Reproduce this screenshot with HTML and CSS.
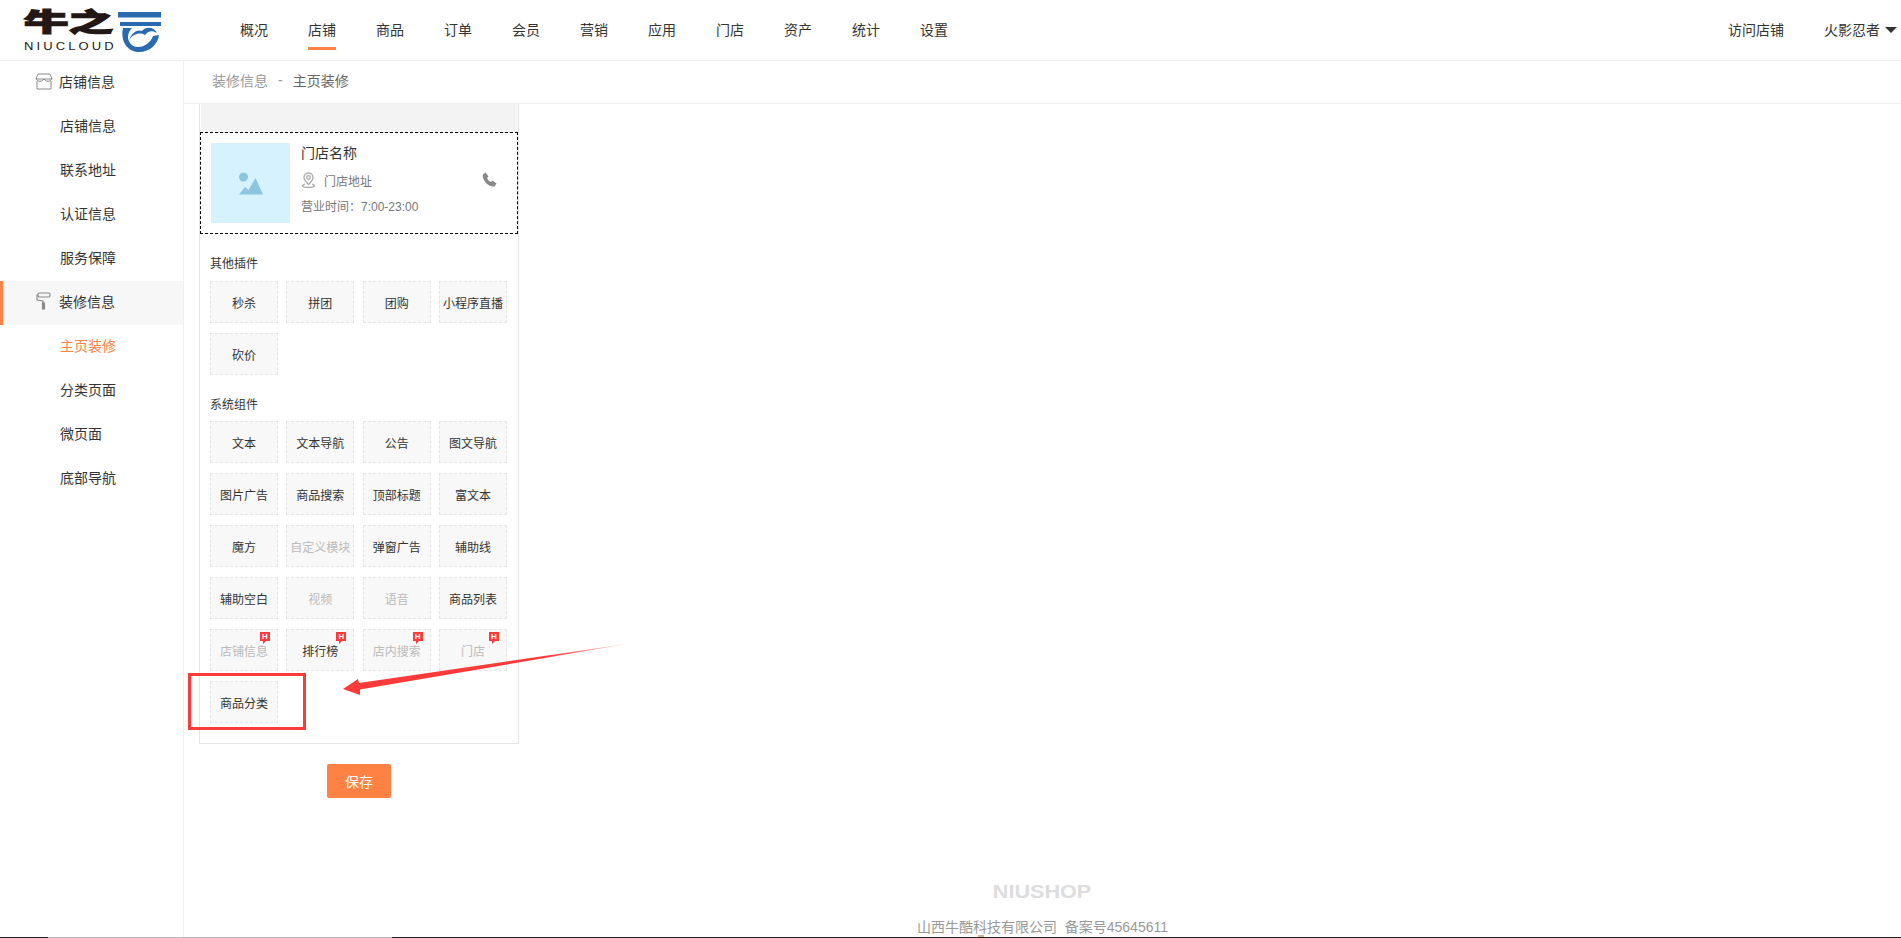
FILE: index.html
```html
<!DOCTYPE html>
<html lang="zh-CN">
<head>
  <meta charset="UTF-8" />
  <title>主页装修</title>
  <link rel="stylesheet" href="styles.css">
</head>
<body>

  <header class="topbar">
    <div class="logo">
      <div class="logo-text">
        <div class="logo-cn">牛之</div>
        <div class="logo-en">NIUCLOUD</div>
      </div>
      <svg class="logo-cloud" width="43" height="41" viewBox="0 0 43 41" fill="#2a6bb0">
        <path d="M0 0h43v5.500H0z"/>
        <path d="M2 10h41v4H2z"/>
        <path d="M5 16C2 30 10 40 21 40c11 0 19-8 20-17l-6 1c-2 6-8 11-15 11-6 0-10-5-10-10 0-4 2-7 4-9z"/>
        <path d="M11 28c3-8 9-11 13-9 4-5 12-4 15 2-5-3-9-2-12 2-5-3-12-1-16 5z"/>
      </svg>
    </div>
    <nav class="nav">
      <a>概况</a>
      <a class="active">店铺</a>
      <a>商品</a>
      <a>订单</a>
      <a>会员</a>
      <a>营销</a>
      <a>应用</a>
      <a>门店</a>
      <a>资产</a>
      <a>统计</a>
      <a>设置</a>
    </nav>
    <div class="top-right">
      <a>访问店铺</a>
      <a class="user">火影忍者<i class="caret"></i></a>
    </div>
  </header>

  <div class="main">
    <aside class="sidebar">
      <div class="side-title">
        <svg width="18" height="17" viewBox="0 0 18 17" fill="none" stroke="#8a8a8a" stroke-width="1">
          <path d="M3 1h12l2 5H1z"/>
          <path d="M1 6c2 3 6 3 8 0 2 3 6 3 8 0"/>
          <path d="M2 8v8h14V8"/>
        </svg>
        <span>店铺信息</span>
      </div>
      <a class="side-link">店铺信息</a>
      <a class="side-link">联系地址</a>
      <a class="side-link">认证信息</a>
      <a class="side-link">服务保障</a>
      <div class="side-title current">
        <svg width="16" height="18" viewBox="0 0 16 18" fill="none" stroke="#8a8a8a" stroke-width="1.2">
          <rect x="2" y="1" width="12" height="4" rx="1.500"/>
          <path d="M2 3H1v5l6 1v2"/>
          <rect x="6.500" y="11" width="2" height="6" fill="#8a8a8a"/>
        </svg>
        <span>装修信息</span>
      </div>
      <a class="side-link on">主页装修</a>
      <a class="side-link">分类页面</a>
      <a class="side-link">微页面</a>
      <a class="side-link">底部导航</a>
    </aside>

    <section class="content">
      <div class="crumb"><span class="crumb-parent">装修信息</span><span class="crumb-sep">-</span><span>主页装修</span></div>

      <div class="editor">
        <div class="panel">
          <div class="panel-top"></div>
          <div class="store-card">
            <div class="thumb">
              <svg width="24" height="23" viewBox="0 0 24 23" fill="#8cc5df">
                <circle cx="4.500" cy="5" r="4.500"/>
                <path d="M0 22.500 6 15l3.500 3L16.500 6 24 22.500z"/>
              </svg>
            </div>
            <div class="store-info">
              <div class="store-name">门店名称</div>
              <div class="store-addr">
                <svg width="15" height="16" viewBox="0 0 15 16" fill="none" stroke="#a8a8a8" stroke-width="1.300">
                  <path d="M7.500 12.500C5 10 3 8 3 5.500a4.500 4.500 0 0 1 9 0c0 2.500-2 4.500-4.500 7z"/>
                  <circle cx="7.500" cy="5.500" r="1.800"/>
                  <path d="M4 12c-5 2-2 3.500 3.500 3.500S16 14 11 12"/>
                </svg>
                <span>门店地址</span>
              </div>
              <div class="store-time">营业时间：7:00-23:00</div>
            </div>
            <svg class="phone" width="15" height="15" viewBox="0 0 15 15" fill="#888">
              <path d="M1 2.500 3.500.5l3 4L5 6c.5 1.500 2.500 3.500 4 4l1.500-1.500 4 3L12.500 14.500C7 15.500-.5 8 1 2.500z"/>
            </svg>
          </div>

          <div class="group-name">其他插件</div>
          <div class="widgets">
            <div class="widget">秒杀</div>
            <div class="widget">拼团</div>
            <div class="widget">团购</div>
            <div class="widget">小程序直播</div>
            <div class="widget">砍价</div>
          </div>

          <div class="group-name">系统组件</div>
          <div class="widgets">
            <div class="widget">文本</div>
            <div class="widget">文本导航</div>
            <div class="widget">公告</div>
            <div class="widget">图文导航</div>
            <div class="widget">图片广告</div>
            <div class="widget">商品搜索</div>
            <div class="widget">顶部标题</div>
            <div class="widget">富文本</div>
            <div class="widget">魔方</div>
            <div class="widget off">自定义模块</div>
            <div class="widget">弹窗广告</div>
            <div class="widget">辅助线</div>
            <div class="widget">辅助空白</div>
            <div class="widget off">视频</div>
            <div class="widget off">语音</div>
            <div class="widget">商品列表</div>
            <div class="widget off">店铺信息<b class="hot">H</b></div>
            <div class="widget">排行榜<b class="hot">H</b></div>
            <div class="widget off">店内搜索<b class="hot">H</b></div>
            <div class="widget off">门店<b class="hot">H</b></div>
            <div class="widget">商品分类</div>
          </div>

          <!-- 截图上的红色标注 -->
          <div class="mark-box"></div>
          <svg class="mark-arrow" width="300" height="70" viewBox="0 0 300 70">
            <defs>
              <linearGradient id="arrowFade" x1="0" x2="1" y1="0" y2="0">
                <stop offset="0.7" stop-color="#fb3a3a"/>
                <stop offset="1" stop-color="#fb3a3a" stop-opacity="0.1"/>
              </linearGradient>
            </defs>
            <path d="M1 49 16 39 17 43 291 3 18 49.500 18 55z" fill="url(#arrowFade)"/>
          </svg>
        </div>
        <button class="save">保存</button>
      </div>

      <footer class="footer">
        <div class="footer-logo">NIUSHOP</div>
        <div class="footer-text">山西牛酷科技有限公司&nbsp;&nbsp;备案号45645611</div>
      </footer>
    </section>
  </div>

  <div class="strip"><i class="strip-light"></i><i class="strip-dot"></i></div>

</body>
</html>
```

FILE: styles.css
```css
* {
  box-sizing: border-box;
}

html, body {
  height: 100%;
}

body {
  margin: 0;
  overflow: hidden;
  display: flex;
  flex-direction: column;
  font-family: "Liberation Sans", "Noto Sans CJK SC", sans-serif;
  font-size: 14px;
  color: #333;
  background: #fff;
}

/* 顶部导航 */
.topbar {
  display: flex;
  align-items: stretch;
  height: 61px;
  flex: none;
  border-bottom: 1px solid #eee;
}

.logo {
  display: flex;
  align-items: flex-start;
  width: 240px;
  padding: 10px 0 0 24px;
}

.logo-text {
  width: 94px;
  color: #231815;
}

.logo-cn {
  font-size: 30px;
  font-weight: 900;
  line-height: 30px;
  white-space: nowrap;
  -webkit-text-stroke: 1.5px #231815;
  transform: scale(1.48, 0.85);
  transform-origin: left top;
}

.logo-en {
  font-size: 10px;
  line-height: 12px;
  letter-spacing: 2.4px;
  margin-top: 1px;
  white-space: nowrap;
  transform: scaleX(1.3);
  transform-origin: left top;
}

.logo-cloud {
  margin-top: 2px;
}

.nav {
  display: flex;
  gap: 40px;
}

.nav a {
  height: 50px;
  line-height: 60px;
}

.nav a.active {
  border-bottom: 3px solid #ff8143;
}

.top-right {
  display: flex;
  gap: 40px;
  margin-left: auto;
  padding-right: 4px;
  line-height: 60px;
}

.caret {
  display: inline-block;
  margin-left: 5px;
  vertical-align: 2px;
  border-top: 6px solid #333;
  border-left: 6px solid transparent;
  border-right: 6px solid transparent;
}

.main {
  display: flex;
  flex: 1;
  min-height: 0;
}

/* 左侧菜单 */
.sidebar {
  width: 184px;
  flex: none;
  border-right: 1px solid #eee;
}

.side-title,
.side-link {
  display: flex;
  align-items: center;
  height: 44px;
  padding-bottom: 4px;
}

.side-title {
  padding-left: 35px;
  gap: 6px;
}

.side-title svg {
  width: 18px;
}

.side-link {
  padding-left: 60px;
}

.side-link.on {
  color: #ff8143;
}

.side-title.current {
  background: #f7f7f7;
  border-left: 3px solid #ff8143;
  padding-left: 32px;
}

/* 内容区 */
.content {
  flex: 1;
  min-width: 0;
  display: flex;
  flex-direction: column;
}

.crumb {
  display: flex;
  align-items: center;
  height: 43px;
  flex: none;
  padding: 0 0 5px 28px;
  border-bottom: 1px solid #eee;
  color: #666;
}

.crumb-parent {
  color: #999;
}

.crumb-sep {
  margin: 0 10px;
  color: #999;
}

.editor {
  padding-left: 15px;
}

.panel {
  position: relative;
  width: 320px;
  height: 640px;
  padding: 0 1px;
  border: 1px solid #e5e5e5;
  border-top: 0;
}

.panel-top {
  height: 28px;
  background: #f3f3f3;
}

.store-card {
  display: flex;
  height: 102px;
  padding: 10px 0 0 10px;
  border: 1px dashed #000;
  margin: 0 -1px;
}

.thumb {
  display: flex;
  align-items: center;
  justify-content: center;
  width: 79px;
  height: 80px;
  flex: none;
  background: #d5f2fe;
}

.store-info {
  flex: 1;
  padding-left: 11px;
  font-size: 12px;
  color: #777;
}

.store-name {
  font-size: 14px;
  line-height: 20px;
  color: #333;
}

.store-addr {
  display: flex;
  align-items: center;
  gap: 8px;
  height: 20px;
  margin-top: 7px;
}

.store-time {
  margin-top: 7px;
  line-height: 20px;
}

.phone {
  margin: 29px 20px 0 0;
}

.group-name {
  padding-left: 9px;
  margin: 22px 0 8px;
  font-size: 12px;
  line-height: 17px;
  color: #333;
}

.widgets + .group-name {
  margin-bottom: 7px;
}

.widgets {
  display: grid;
  grid-template-columns: repeat(4, 68px);
  grid-auto-rows: 42px;
  gap: 10px 8.33px;
  padding-left: 9px;
}

.widget {
  position: relative;
  display: flex;
  align-items: center;
  justify-content: center;
  white-space: nowrap;
  font-size: 12px;
  color: #333;
  background: #f8f8f8;
  border: 1px dashed #e5e5e5;
}

.widget.off {
  color: #bbb;
}

.hot {
  position: absolute;
  top: 2px;
  right: 7px;
  width: 10px;
  height: 9px;
  background: #fb3a3a;
  color: #fff;
  font-size: 8px;
  line-height: 9px;
  text-align: center;
}

.hot::after {
  content: "";
  position: absolute;
  left: 3px;
  top: 9px;
  border-top: 3px solid #fb3a3a;
  border-right: 3px solid transparent;
}

.mark-box {
  position: absolute;
  left: -12px;
  top: 569px;
  width: 118px;
  height: 57px;
  border: 3px solid #fb3a3a;
}

.mark-arrow {
  position: absolute;
  left: 142px;
  top: 536px;
}

.save {
  display: block;
  width: 64px;
  height: 34px;
  margin: 20px 0 0 128px;
  padding: 0;
  border: 0;
  border-radius: 2px;
  background: #ff8143;
  color: #fff;
  font: inherit;
}

.footer {
  margin-top: auto;
  text-align: center;
  color: #999;
}

.footer-logo {
  width: fit-content;
  margin: 0 auto;
  font-size: 18px;
  font-weight: 700;
  color: #ddd;
  line-height: 22px;
  transform: scaleX(1.2);
}

.footer-text {
  margin-top: 15px;
  line-height: 19px;
}

.strip {
  position: relative;
  height: 1px;
  flex: none;
  background: #222;
}

.strip-light {
  position: absolute;
  left: 48px;
  width: 344px;
  top: 0;
  bottom: 0;
  background: #bbb;
}

.strip-dot {
  position: absolute;
  left: 978px;
  top: -2px;
  width: 6px;
  height: 2px;
  background: #d9b48f;
}
```
